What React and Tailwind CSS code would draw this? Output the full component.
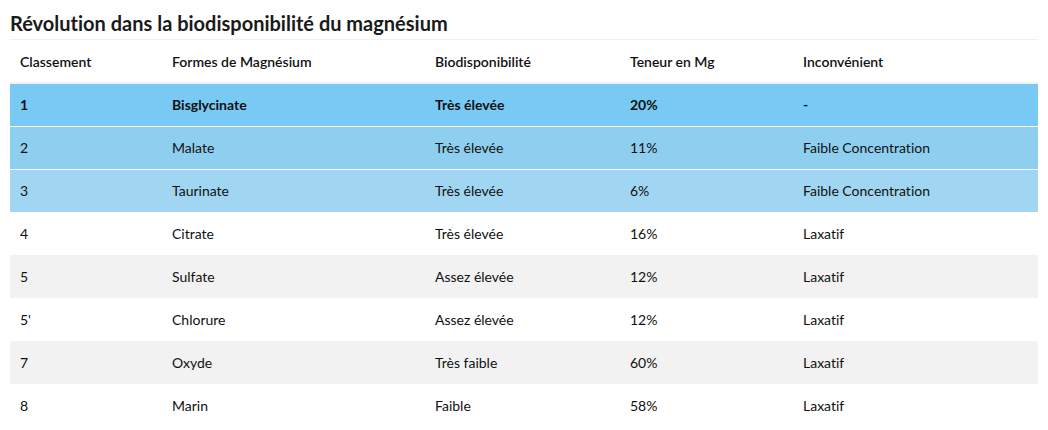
import React from "react";

const rows = [
  ["1", "Bisglycinate", "Très élevée", "20%", "-", "bg-[#78c9f3] font-bold"],
  ["2", "Malate", "Très élevée", "11%", "Faible Concentration", "bg-[#8ecfef]"],
  ["3", "Taurinate", "Très élevée", "6%", "Faible Concentration", "bg-[#a0d6f1]"],
  ["4", "Citrate", "Très élevée", "16%", "Laxatif", "bg-white"],
  ["5", "Sulfate", "Assez élevée", "12%", "Laxatif", "bg-[#f2f2f2]"],
  ["5'", "Chlorure", "Assez élevée", "12%", "Laxatif", "bg-white"],
  ["7", "Oxyde", "Très faible", "60%", "Laxatif", "bg-[#f2f2f2]"],
  ["8", "Marin", "Faible", "58%", "Laxatif", "bg-white"],
];

export default function App() {
  return (
    <div className="bg-white w-[1048px] h-[430px] px-[10px] pt-[8px] text-[#111] [font-variant-ligatures:none]" style={{ fontFamily: "Lato, 'Noto Sans', sans-serif" }}>
      <h2 className="text-[20px] font-bold leading-[30px] text-[#1a1a1a] pb-[1px] border-b border-[#f0f0f0]">
        Révolution dans la biodisponibilité du magnésium
      </h2>
      <table className="w-full table-fixed border-collapse text-[14px] text-[#111]">
        <colgroup>
          <col className="w-[152px]" />
          <col className="w-[263px]" />
          <col className="w-[195px]" />
          <col className="w-[173px]" />
          <col />
        </colgroup>
        <thead>
          <tr className="h-[43px] border-b-2 border-[#f2f2f2]">
            {["Classement", "Formes de Magnésium", "Biodisponibilité", "Teneur en Mg", "Inconvénient"].map((h) => (
              <th key={h} className="text-left font-semibold px-[10px] align-middle">{h}</th>
            ))}
          </tr>
        </thead>
        <tbody>
          {rows.map((r, i) => (
            <tr key={i} className={`h-[43px] ${r[5]} ${i < 2 ? "border-b border-white" : ""}`}>
              {r.slice(0, 5).map((c, j) => (
                <td key={j} className="px-[10px] align-middle">{c}</td>
              ))}
            </tr>
          ))}
        </tbody>
      </table>
    </div>
  );
}
